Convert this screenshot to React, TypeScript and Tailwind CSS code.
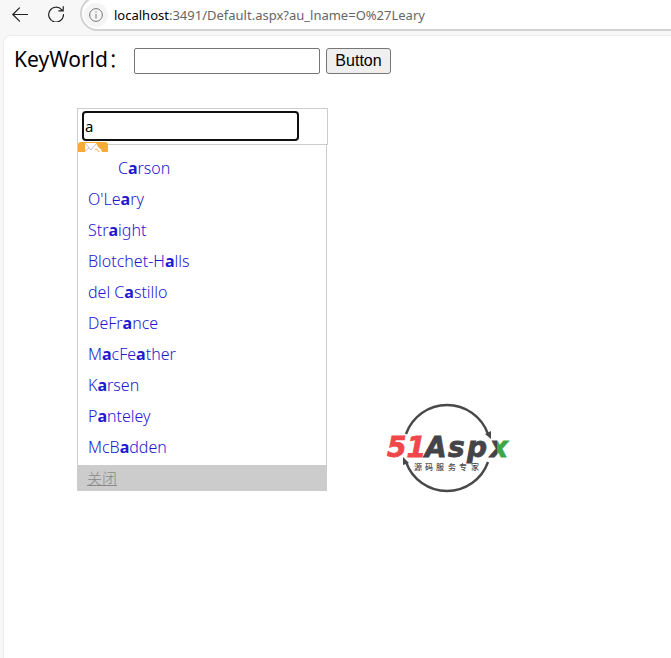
import React from 'react';

type Author = { id: string; name: string };

const authors: Author[] = [
  { id: 'carson', name: 'Carson' },
  { id: 'oleary', name: "O'Leary" },
  { id: 'straight', name: 'Straight' },
  { id: 'blotchet-halls', name: 'Blotchet-Halls' },
  { id: 'del-castillo', name: 'del Castillo' },
  { id: 'defrance', name: 'DeFrance' },
  { id: 'macfeather', name: 'MacFeather' },
  { id: 'karsen', name: 'Karsen' },
  { id: 'panteley', name: 'Panteley' },
  { id: 'mcbadden', name: 'McBadden' },
];

const Highlight = ({ text, term }: { text: string; term: string }) => (
  <>
    {text.split(term).map((part, i) => (
      <React.Fragment key={i}>
        {i > 0 && <b className="font-bold">{term}</b>}
        {part}
      </React.Fragment>
    ))}
  </>
);

const AddressBar = () => (
  <header className="flex h-[31px] items-start bg-[#f7f7f7]">
    <button type="button" aria-label="Back" className="ml-3 mt-1.5 h-4 w-4">
      <svg viewBox="0 0 16 16" className="h-4 w-4" fill="none" stroke="#222" strokeWidth="1.2" strokeLinecap="round" strokeLinejoin="round">
        <path d="M15.5 8.5H0.8M7.5 1.8L0.8 8.5l6.7 6.7" />
      </svg>
    </button>
    <button type="button" aria-label="Refresh" className="ml-5 mt-1.5 h-4 w-4">
      <svg viewBox="0 0 16 16" className="h-4 w-4" fill="none" stroke="#222" strokeWidth="1.2" strokeLinecap="round" strokeLinejoin="round">
        <path d="M15.5 8.5A7.4 7.4 0 1 1 13.8 3.9M15.2 0.6V4.9H10.8" />
      </svg>
    </button>
    <div className="-mt-1 ml-4 flex h-[35px] flex-1 items-center rounded-l-full border-2 border-r-0 border-[#d2d2d2] bg-white pl-0.5 pt-0.5">
      <span className="flex h-6 w-6 items-center justify-center rounded-full bg-[#f5f5f5]">
        <svg viewBox="0 0 14 14" className="h-3.5 w-3.5" fill="none" stroke="#777" strokeWidth="1">
          <circle cx="7" cy="7" r="6.4" />
          <path d="M7 6v4.5M7 3.5v1.2" />
        </svg>
      </span>
      <span className="ml-1.5 whitespace-nowrap pt-0.5 font-['Noto_Sans',sans-serif] text-[13px] text-[#666]">
        <span className="text-black">localhost</span>:3491/Default.aspx?au_lname=O%27Leary
      </span>
    </div>
  </header>
);

const SearchForm = () => (
  <form className="flex items-center" onSubmit={(e) => e.preventDefault()}>
    <label htmlFor="keyword" className="w-[120px] whitespace-nowrap pb-1 font-['Noto_Sans','Noto_Sans_CJK_SC',sans-serif] text-[21px] leading-[22px] text-black">
      KeyWorld<span className="font-light">：</span>
    </label>
    <input id="keyword" type="text" className="h-[26px] w-[186px] rounded-xs border border-[#767676] bg-white px-1" />
    <button type="submit" className="ml-1.5 h-[26px] w-[65px] rounded-[3px] border border-[#767676] bg-[#efefef] font-['Liberation_Sans',sans-serif] text-base leading-5 text-black">
      Button
    </button>
  </form>
);

const MailIcon = () => (
  <svg viewBox="0 0 30 10" className="h-2.5 w-[30px]" fill="none">
    <path d="M3 0H27Q30 0 30 3V10H0V3Q0 0 3 0Z" fill="#f5ab35" />
    <path d="M7 1H18L23 10H7Z" fill="#fff" />
    <path d="M7 1L13 8L18 2M7 9L11 6" stroke="#c5bdd5" strokeWidth="1" />
    <path d="M17 5Q23 5 24 10H15Z" fill="#fff" />
    <path d="M17 7Q20 7 21 10" stroke="#f5ab35" strokeWidth="1" />
  </svg>
);

const Suggestions = () => (
  <div className="w-[251px]">
    <div className="border border-[#ccc] px-1 pb-[3px] pt-0.5">
      <input
        type="text"
        aria-label="Author name"
        defaultValue="a"
        className="block h-[30px] w-[217px] rounded-sm border-2 border-[#101010] bg-white px-px font-['Noto_Sans',sans-serif] text-[15px] text-black outline-none"
      />
    </div>
    <div className="relative w-[250px] border-x border-[#ccc] pb-0.5 pt-2 font-['Noto_Sans',sans-serif] text-base font-light text-[#2318d0]">
      <span className="absolute -top-[3px] left-0">
        <MailIcon />
      </span>
      <ul>
        {authors.map((author) => (
          <li key={author.id} className="pl-2.5 leading-[31px] first:pl-10">
            <a href={`#${author.id}`}>
              <Highlight text={author.name} term="a" />
            </a>
          </li>
        ))}
      </ul>
    </div>
    <div className="flex h-[26px] w-[250px] items-center bg-[#ccc] pl-2.5">
      <a href="#close" className="font-['Noto_Sans_CJK_SC',sans-serif] text-[15px] font-light leading-5 text-[#888] underline">
        关闭
      </a>
    </div>
  </div>
);

const Logo = () => (
  <svg viewBox="0 0 126 92" className="h-[92px] w-[126px]" role="img" aria-label="51Aspx">
    <defs>
      <linearGradient id="leaf" x1="0" y1="0" x2="1" y2="0">
        <stop offset="0.45" stopColor="#444448" />
        <stop offset="0.45" stopColor="#3fa648" />
      </linearGradient>
    </defs>
    <g fill="none" stroke="#48484b" strokeWidth="2.4">
      <path d="M20 33A43.5 43.5 0 0 1 102 33" />
      <path d="M20 61A43.5 43.5 0 0 0 102 61" />
    </g>
    <path d="M99 33L105 30V38Z" fill="#48484b" />
    <path d="M17 56V64L23 62Z" fill="#48484b" />
    <g fontFamily="DejaVu Sans" fontSize="28" fontWeight="700" fontStyle="italic" strokeWidth="0.8">
      <text x="1" y="56" fill="#f0474b" stroke="#f0474b">51</text>
      <text x="39" y="56" fill="#444448" stroke="#444448">A</text>
      <text x="62" y="56" fill="#444448" stroke="#444448">s</text>
      <text x="81" y="56" fill="#444448" stroke="#444448">p</text>
      <text x="104" y="56" fill="url(#leaf)" stroke="url(#leaf)">x</text>
    </g>
    <g fontFamily="Noto Sans CJK SC" fontSize="8" fontWeight="500" fill="#48484b">
      <text x="28" y="69">源</text>
      <text x="39" y="69">码</text>
      <text x="50" y="69">服</text>
      <text x="62" y="69">务</text>
      <text x="73" y="69">专</text>
      <text x="85" y="69">家</text>
    </g>
  </svg>
);

const App = () => {
  return (
    <div className="flex min-h-screen flex-col bg-[#f7f7f7]">
      <AddressBar />
      <main className="ml-[3px] mt-1 flex-1 rounded-tl-lg border-l border-t border-[#ececec] bg-white pl-2.5 pt-3">
        <SearchForm />
        <div className="flex items-end pl-[63px] pt-[34px]">
          <Suggestions />
          <div className="-mb-0.5 ml-[58px]">
            <Logo />
          </div>
        </div>
      </main>
    </div>
  );
};

export default App;
